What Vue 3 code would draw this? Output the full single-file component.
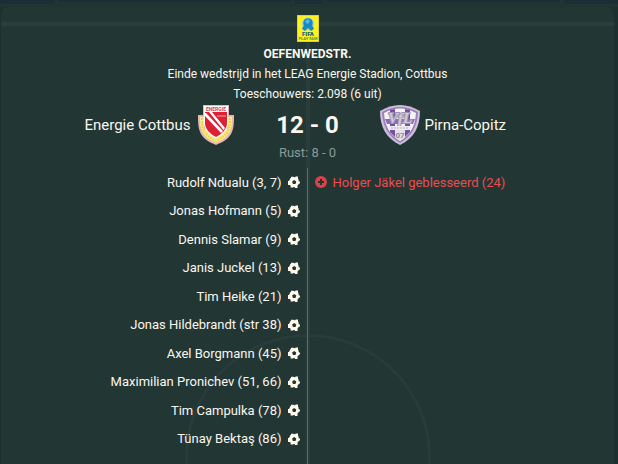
<template>
  <div class="match-screen">
    <div class="tabs">
      <span class="tab tab--side" />
      <span class="tab" />
      <span class="tab tab--small" />
      <span class="tab" />
      <span class="tab tab--side" />
    </div>

    <main class="panel">
      <div class="pitch">
        <div class="pitch-line" />
        <div class="pitch-half" />
        <div class="pitch-circle" />
      </div>

      <header class="match-info">
        <svg class="fifa" viewBox="0 0 22 27" role="img" aria-label="FIFA Play Fair">
          <rect width="22" height="27" fill="#d9d62f" />
          <rect x="1" y="1" width="20" height="25" fill="#fff021" />
          <circle cx="11" cy="9" r="6.5" fill="#b9dda0" />
          <circle cx="11" cy="8" r="4.8" fill="#1588cc" />
          <path d="M8 6l3-2 2 2-2 3-2-1z" fill="#53b6e4" />
          <path d="M7 10l-2 4 3 2 3-3 3 3 3-2-2-4-4 2z" fill="#168bc8" />
          <text class="fifa-name" x="11" y="21" text-anchor="middle">FIFA</text>
          <text class="fifa-sub" x="11" y="25" text-anchor="middle">PLAY FAIR</text>
        </svg>
        <h1 class="competition">OEFENWEDSTR.</h1>
        <p class="info-line">Einde wedstrijd in het LEAG Energie Stadion, Cottbus</p>
        <p class="info-line">Toeschouwers: 2.098 (6 uit)</p>
      </header>

      <section class="scoreboard">
        <div class="team team--home">
          <span>Energie Cottbus</span>
          <svg class="crest" viewBox="0 0 40 40" aria-hidden="true">
            <path d="M7 0h26v10h5c0 7 0 12-2 17-3 7-9 10-16 13C13 37 7 34 4 27 2 22 2 17 2 10h5z" fill="#e6b6b4" />
            <path d="M4 12h4v12h24V12h4c0 6 0 10-2 14-3 6-8 9-14 12C14 35 9 32 6 26 4 22 4 18 4 12z" fill="#f7efa6" />
            <path d="M6 13c0 6 0 9 2 13 3 5 7 7 12 10 5-3 9-5 12-10 2-4 2-7 2-13" fill="none" stroke="#ecd93a" stroke-width="2.4" stroke-dasharray="2 .8" />
            <path d="M8 1h24v17c0 7-6 12-12 15C14 30 8 25 8 18z" fill="#fff" />
            <path d="M9 7h22v11c0 6-5 11-11 14C14 29 9 24 9 18z" fill="#dc2035" />
            <path d="M9 8h1l17 18-2 2L9 11zM13 7h3l13 16-1.500 2z" fill="#fff" />
            <text class="crest-red" x="20" y="6" text-anchor="middle">ENERGIE</text>
            <path d="M21 11h9" stroke="#f7a2a7" stroke-width="1" />
          </svg>
        </div>

        <strong class="score">12 - 0</strong>

        <div class="team team--away">
          <svg class="crest" viewBox="0 0 40 40" aria-hidden="true">
            <path d="M0 6Q20-6 40 6c0 16-6 27-20 34C6 33 0 22 0 6z" fill="#cdbfda" />
            <path d="M2 7Q20-3 38 7C37 22 32 31 20 38 8 31 3 22 2 7z" fill="#9a80b8" />
            <path d="M4 8Q20-1 36 8c-1 14-6 22-16 28C10 30 5 22 4 8z" fill="#f5f2f8" />
            <path d="M10 5l5-1v28l-5-5zM25 4l5 1v22l-5 5z" fill="#7250a4" />
            <path d="M5 14h30l-2 5H7z" fill="#8a6bb4" />
            <text class="crest-script crest-script--edge" x="20" y="18" text-anchor="middle">VfL</text>
            <text class="crest-script" x="20" y="18" text-anchor="middle">VfL</text>
            <path d="M8 21h24l-2 4H10z" fill="#eee9f2" />
            <path d="M11 23h18" stroke="#b9aac7" stroke-dasharray="2 1" />
            <path d="M15 25h10v7l-5 4-5-4z" fill="#e4e0e2" />
            <text class="crest-number" x="20" y="33" text-anchor="middle">07</text>
          </svg>
          <span>Pirna-Copitz</span>
        </div>
      </section>
      <p class="half-time">Rust: 8 - 0</p>

      <section class="events">
        <ul class="event-list event-list--home">
          <li v-for="goal in goals" :key="goal" class="event">
            <span>{{ goal }}</span>
            <svg class="icon" viewBox="0 0 12 12" aria-hidden="true">
              <circle cx="6" cy="6" r="5.300" fill="#fff9ec" />
              <path
                d="M3 .8h2.500v2H3zM7.500 .5h2.500v2.500H7.500zM0 5h2v4H0zM10 5h2v2.500h-2zM2.500 9h2.500v2.500H2.500zM7 9.500h2.500V12H7z"
                fill="#fff9ec"
              />
              <path
                d="M6.200 3.900l2.100 1.500-.8 2.500H4.900l-.8-2.500zM5.400 0h1.800l-.9 1.600zM0 3l2 .3L.9 5zM12 3.300l-1.600.6.6 1.500 1 .2zM1 9.300l1.500.1.2 1.600zM10.800 8l-1.300 1.200.8 1.500z"
                fill="#223634"
              />
            </svg>
          </li>
        </ul>
        <ul class="event-list event-list--away">
          <li v-for="injury in injuries" :key="injury" class="event event--injury">
            <svg class="icon" viewBox="0 0 12 12" aria-hidden="true">
              <circle cx="6" cy="6" r="6" fill="#d8434a" />
              <path d="M5 3h2v2h2v2H7v2H5V7H3V5h2z" fill="#223634" />
            </svg>
            <span>{{ injury }}</span>
          </li>
        </ul>
      </section>
    </main>
  </div>
</template>

<script setup>
const goals = [
  'Rudolf Ndualu (3, 7)',
  'Jonas Hofmann (5)',
  'Dennis Slamar (9)',
  'Janis Juckel (13)',
  'Tim Heike (21)',
  'Jonas Hildebrandt (str 38)',
  'Axel Borgmann (45)',
  'Maximilian Pronichev (51, 66)',
  'Tim Campulka (78)',
  'Tünay Bektaş (86)',
]

const injuries = ['Holger Jäkel geblesseerd (24)']
</script>

<style>
body {
  margin: 0;
  background: #1c302f;
}
</style>

<style scoped>
.match-screen {
  min-height: 100vh;
  display: flex;
  flex-direction: column;
  background: #1c302f;
  color: #fbf7ef;
  font-family: Roboto, "Liberation Sans", sans-serif;
  font-size: 13px;
}

.tabs {
  height: 7px;
  display: flex;
  gap: 4px;
  background: #203432;
}

.tab {
  flex: 5;
  height: 2px;
  background: #1b2d35;
}

.tab--side {
  flex: 0 0 54px;
  height: 4px;
}

.tab--small {
  flex: 0 0 28px;
  height: 4px;
}

.panel {
  position: relative;
  flex: 1;
  display: flex;
  flex-direction: column;
  margin: 0 4px 0 1px;
  border-radius: 8px 8px 0 0;
  background: #223634;
  overflow: hidden;
}

.pitch {
  position: absolute;
  inset: 0;
  overflow: hidden;
}

.pitch-line {
  margin-top: 15px;
  height: 4px;
  background: #2a3e3c;
}

.pitch-half {
  width: 4px;
  height: 100%;
  margin: 0 auto;
  background: #293d3b;
}

.pitch-circle {
  position: absolute;
  top: 327px;
  left: 50%;
  width: 240px;
  height: 240px;
  border: 3px solid #283c3a;
  border-radius: 50%;
  transform: translateX(-50%);
}

.match-info,
.scoreboard,
.half-time,
.events {
  position: relative;
}

.match-info {
  display: flex;
  flex-direction: column;
  align-items: center;
  padding-top: 8px;
}

.fifa {
  width: 22px;
  height: 27px;
}

.fifa-name {
  font-size: 6px;
  font-weight: 900;
  fill: #125b82;
}

.fifa-sub {
  font-size: 4px;
  font-weight: 700;
  fill: #438f65;
}

.competition {
  margin: 2px 0 0;
  font-size: 12px;
  font-weight: 700;
  line-height: 20px;
}

.info-line {
  margin: 0;
  font-size: 12px;
  line-height: 20px;
}

.scoreboard {
  display: grid;
  grid-template-columns: 1fr 144px 1fr;
  align-items: center;
  margin-top: 1px;
}

.team {
  display: flex;
  align-items: center;
  gap: 5px;
  font-size: 15px;
}

.team--home {
  justify-content: flex-end;
}

.crest {
  width: 40px;
  height: 40px;
}

.crest-red {
  font-size: 5px;
  font-weight: 700;
  fill: #d54450;
}

.crest-script {
  font-family: "Liberation Serif", serif;
  font-size: 15px;
  font-style: italic;
  font-weight: 700;
  fill: #cfc9d6;
}

.crest-script--edge {
  stroke: #a194b0;
  stroke-width: 2px;
}

.crest-number {
  font-size: 8px;
  font-weight: 700;
  fill: #8f8994;
}

.score {
  text-align: center;
  font-size: 24px;
  font-weight: 700;
  line-height: 40px;
}

.half-time {
  margin: 0;
  color: #8a9b9a;
  text-align: center;
  line-height: 16px;
  padding-bottom: 7px;
}

.events {
  flex: 1;
  display: grid;
  grid-template-columns: 1fr 1fr;
}

.event-list {
  display: grid;
  grid-template-rows: repeat(10, minmax(20px, 1fr));
  margin: 0;
  padding: 0 7px 11px;
  list-style: none;
}

.event-list--home {
  border-right: 1px solid #5b6b69;
}

.event {
  display: flex;
  align-items: center;
  gap: 6px;
}

.event-list--home .event {
  justify-content: flex-end;
}

.event--injury {
  color: #ea4d50;
}

.icon {
  width: 12px;
  height: 12px;
}
</style>
